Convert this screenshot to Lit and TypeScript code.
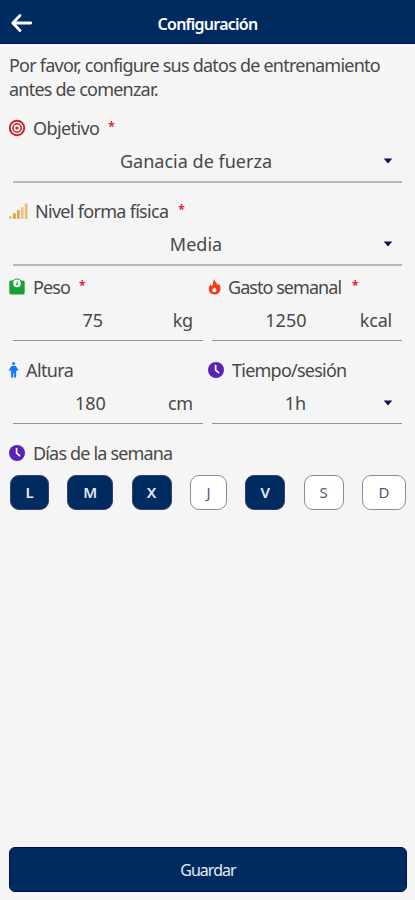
import { LitElement, html, css, svg, nothing } from "lit";
import { customElement, property } from "lit/decorators.js";

const icons: Record<string, unknown> = {
  target: html`<svg width="17" height="18" viewBox="0 0 17 18">
    <circle cx="8" cy="9" r="7.2" fill="#fff" stroke="#c9252b" stroke-width="2" />
    <circle cx="8" cy="9" r="4.2" fill="none" stroke="#c9252b" stroke-width="1.6" />
    <circle cx="8" cy="9" r="1.6" fill="#c9252b" />
  </svg>`,
  signal: html`<svg width="19" height="18" viewBox="0 0 19 18">
    ${[
      [0, 3, "#ecc078"],
      [4, 6, "#e0a030"],
      [8, 9, "#e3a83c"],
      [12, 12, "#f0c08c"],
      [15.8, 15.5, "#e8bd6c"],
    ].map(([x, h, c]) => svg`<rect x=${x} y=${17 - Number(h)} width="2.7" height=${h} rx=".8" fill=${c} />`)}
  </svg>`,
  scale: html`<svg width="17" height="18" viewBox="0 0 17 18">
    <path d="M2 2.5H14A1.7 1.7 0 0 1 15.7 4.2V14.8A1.7 1.7 0 0 1 14 16.5H2A1.7 1.7 0 0 1 .3 14.8V4.2A1.7 1.7 0 0 1 2 2.5Z" fill="#17a035" />
    <circle cx="8" cy="5.4" r="4.9" fill="#17a035" />
    <circle cx="8" cy="5.4" r="3.8" fill="#fff" />
    <path d="M7.8 6.2L8.6 3.8" stroke="#17a035" stroke-width="1" stroke-linecap="round" />
    <circle cx="7.8" cy="6.4" r=".9" fill="#17a035" />
  </svg>`,
  person: html`<svg width="10" height="18" viewBox="0 0 10 18">
    <circle cx="4.6" cy="2.5" r="1.5" fill="#1677f2" />
    <path d="M3 6L.9 9M6.2 6L8.3 9" fill="none" stroke="#1677f2" stroke-width="1.8" stroke-linecap="round" />
    <path d="M2.9 5.1H6.3L7 6.2V15.6A.9.9 0 0 1 5.2 15.6V12.2H4V15.6A.9.9 0 0 1 2.2 15.6V6.2Z" fill="#1677f2" stroke="#1677f2" stroke-width=".4" />
  </svg>`,
  flame: html`<svg width="13" height="18" viewBox="0 0 13 18">
    <path d="M6.2 1C6.9 4.2 9 5.4 10 7.2C10.5 6.7 10.6 6.1 10.6 5.4C12 7 12.7 8.9 12.5 11C12.2 14.3 9.7 16.5 6.6 16.5C3.2 16.5.8 14.3.8 11.1C.8 9.2 1.6 7.6 2.8 6.3C3 7.4 3.3 8 4 8.2C5.4 6.5 4.8 3.5 6.2 1Z" fill="#f23c10" />
    <path d="M6.6 9C6.9 10 8.5 10.7 8.5 12.2A2.1 2.1 0 0 1 4.3 12.2C4.3 11.4 4.7 10.9 5.2 10.4C5.9 10.5 6.5 9.9 6.6 9Z" fill="#fff" />
  </svg>`,
  clock: html`<svg width="17" height="18" viewBox="0 0 17 18">
    <circle cx="8" cy="9" r="8" fill="#5b22b5" />
    <path d="M7.6 4.6V9.2L10.6 11.6" fill="none" stroke="#fff" stroke-width="1.7" stroke-linecap="round" stroke-linejoin="round" />
  </svg>`,
};

@customElement("form-label")
class FormLabel extends LitElement {
  @property() icon = "";
  @property() text = "";
  @property({ type: Boolean }) required = false;

  static styles = css`
    :host { display: flex; align-items: center; height: 24px; white-space: nowrap; }
    .icon { display: flex; }
    .text { margin-left: 7px; letter-spacing: var(--label-spacing, -0.7px); }
    .star { color: #e0263c; font-size: 12px; margin-left: var(--star-gap, 9px); line-height: 22px; height: 24px; font-weight: 700; }
  `;

  render() {
    return html`<span class="icon">${icons[this.icon]}</span>
      <span class="text">${this.text}</span>
      ${this.required ? html`<span class="star">*</span>` : nothing}`;
  }
}

@customElement("form-field")
class FormField extends LitElement {
  @property() icon = "";
  @property() label = "";
  @property() value = "";
  @property() unit = "";
  @property({ type: Boolean }) required = false;
  @property({ type: Boolean }) select = false;

  static styles = css`
    :host { display: block; }
    .control {
      display: flex; align-items: center; box-sizing: border-box; height: var(--control-height, 43px);
      margin-left: 4px; padding-right: 10px;
      border-bottom: var(--rule, 2px solid #b8b8b8);
    }
    .value { flex: 1; text-align: center; }
    .select .value { padding-right: 4px; letter-spacing: 0.02px; }
    .unit { letter-spacing: -0.2px; }
    .caret { margin: 0 -1px 0 0; }
  `;

  render() {
    return html`<form-label icon=${this.icon} text=${this.label} ?required=${this.required}></form-label>
      <div class="control ${this.select ? "select" : ""}">
        <span class="value">${this.value}</span>
        ${this.unit ? html`<span class="unit">${this.unit}</span>` : nothing}
        ${this.select
          ? html`<svg class="caret" width="10" height="6" viewBox="0 0 10 6"><path d="M.7 .6H9.3L5 5.4Z" fill="#140f56" /></svg>`
          : nothing}
      </div>`;
  }
}

@customElement("app-root")
class AppRoot extends LitElement {
  static styles = css`
    :host {
      display: flex; flex-direction: column; box-sizing: border-box; height: 900px;
      background: #f5f5f5; color: #484848;
      font: 18px/24px "Noto Sans", "Open Sans", sans-serif;
    }
    header {
      display: grid; grid-template-columns: 44px 1fr 44px; align-items: center;
      box-sizing: border-box; height: 44px; padding-top: 4px;
      background: #002b60; border-bottom: 1px solid #00104a; color: #fff;
    }
    .back { margin: -2px 0 0 10px; }
    h1 { margin: 0; text-align: center; font-size: 16px; font-weight: 600; letter-spacing: -0.75px; }
    .intro { margin: 10px 9px 0; line-height: 23.5px; letter-spacing: -0.77px; white-space: nowrap; }
    .form { display: flex; flex-direction: column; margin: 15px 13px 0 9px; }
    .pair {
      --control-height: 42px; --rule: 1px solid #939393;
      display: grid; grid-template-columns: 194px 194px; justify-content: space-between;
    }
    .first { margin-bottom: 16px; --label-spacing: -0.6px; }
    .second { margin-bottom: 9px; --star-gap: 10px; }
    .third { margin-bottom: 17px; }
    .peso { --label-spacing: -0.9px; }
    .gasto { --label-spacing: -0.95px; --star-gap: 11px; }
    .tiempo { --label-spacing: -0.76px; }
    .altura { --label-spacing: -0.6px; }
    .days-label { margin: 17px 0 0 9px; --label-spacing: -0.83px; }
    .days { display: flex; justify-content: space-between; margin: 10px 9px 0 10px; }
    .day {
      box-sizing: border-box; height: 35px; border: 1px solid #8b8d96; border-radius: 9px;
      background: #fff; color: #55587c; padding: 0;
      font: 15px/1 "Noto Sans", sans-serif;
    }
    .day.on { background: #002b60; border-color: #36406e; color: #e6e9f2; font-weight: 600; }
    .save {
      margin: auto 8px 8px 9px; height: 45px; flex: none; border: 1px solid #000f4c; border-radius: 6px;
      background: #002b60; color: #e8edf6; font: 16px/1 "Noto Sans", sans-serif; letter-spacing: -0.95px;
    }
  `;

  private days = [
    { name: "L", on: true, width: 39 },
    { name: "M", on: true, width: 46 },
    { name: "X", on: true, width: 40 },
    { name: "J", on: false, width: 37 },
    { name: "V", on: true, width: 40 },
    { name: "S", on: false, width: 40 },
    { name: "D", on: false, width: 44 },
  ];

  render() {
    return html`
      <header>
        <svg class="back" width="24" height="20" viewBox="0 0 24 20">
          <path d="M10 2.6L2.8 10L10 17.4M3 10H20.7" fill="none" stroke="#fff" stroke-width="2.8" stroke-linecap="round" stroke-linejoin="round" />
        </svg>
        <h1>Configuración</h1>
      </header>
      <div class="intro">Por favor, configure sus datos de entrenamiento<br />antes de comenzar.</div>
      <div class="form">
        <form-field class="first" icon="target" label="Objetivo" value="Ganacia de fuerza" required select></form-field>
        <form-field class="second" icon="signal" label="Nivel forma física" value="Media" required select></form-field>
        <div class="pair third">
          <form-field class="peso" icon="scale" label="Peso" value="75" unit="kg" required></form-field>
          <form-field class="gasto" icon="flame" label="Gasto semanal" value="1250" unit="kcal" required></form-field>
        </div>
        <div class="pair">
          <form-field class="altura" icon="person" label="Altura" value="180" unit="cm"></form-field>
          <form-field class="tiempo" icon="clock" label="Tiempo/sesión" value="1h" select></form-field>
        </div>
      </div>
      <form-label class="days-label" icon="clock" text="Días de la semana"></form-label>
      <div class="days">
        ${this.days.map((d) => html`<button class="day ${d.on ? "on" : ""}" style="width:${d.width}px">${d.name}</button>`)}
      </div>
      <button class="save">Guardar</button>
    `;
  }
}
